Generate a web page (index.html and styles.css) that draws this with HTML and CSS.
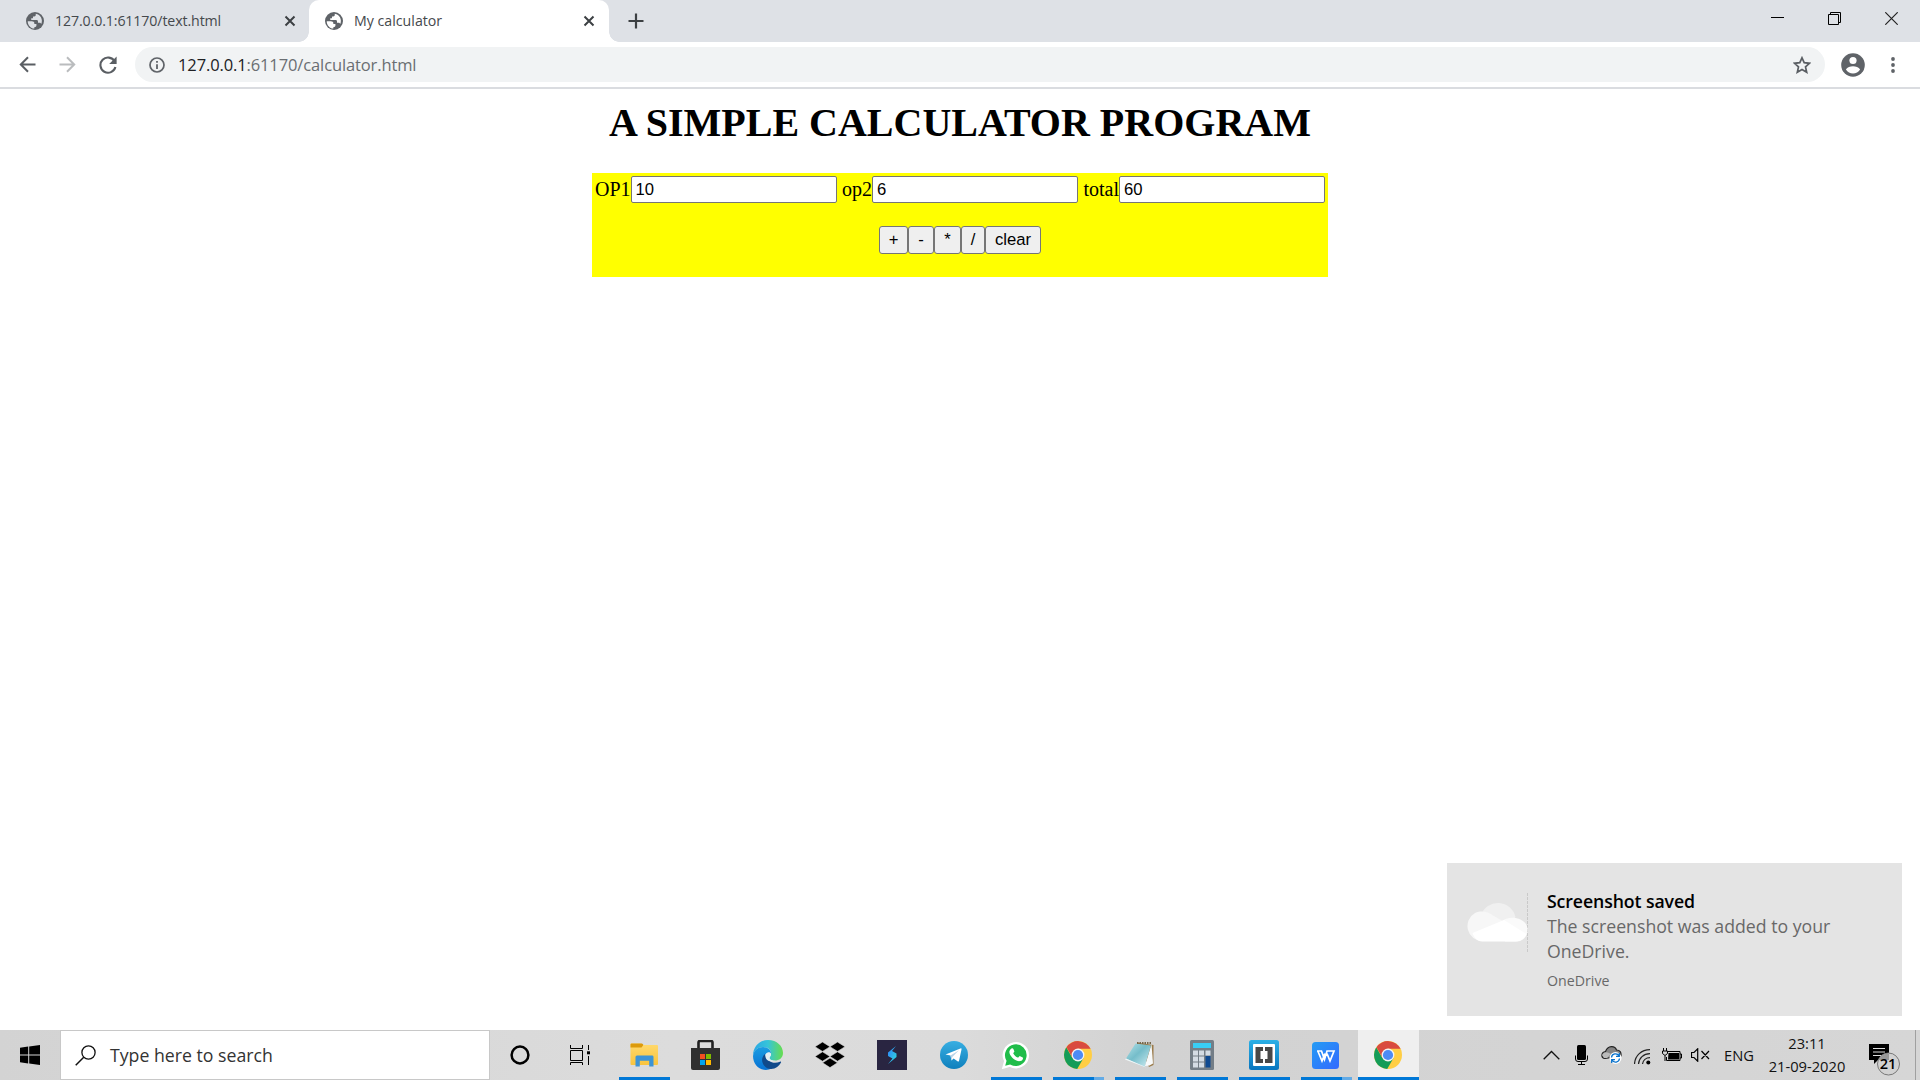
FILE: index.html
```html
<!DOCTYPE html>
<html lang="en">
<head>
<meta charset="utf-8">
<title>My calculator</title>
<link rel="stylesheet" href="styles.css">
</head>
<body>
<svg class="defs" width="0" height="0">
  <defs>
    <symbol id="globe" viewBox="0 0 24 24"><circle cx="12" cy="12" r="12" fill="#5f6368"/><path d="M2.3 12.2h5.500c2 0 3.300.9 3.300 2.600v1.100h2.800v2.200c0 1.600-1.200 2.200-2.800 2.200v1.800C6 21.700 2.300 17.500 2.300 12.200zM13 2.300V4c0 1.200-.8 1.900-2 1.900H9.300v2.400H7v2.300h7c1.500 0 2 .8 2 2v1.600h2c1 0 1.900.7 2.300 1.700 2.700-5.300-.7-12.800-7.300-13.600z" fill="var(--hole)"/></symbol>
    <symbol id="close" viewBox="0 0 12 12"><path d="M1.500 1.500l9 9M10.500 1.500l-9 9" stroke="#3c4043" stroke-width="2" fill="none"/></symbol>
    <symbol id="chrome" viewBox="0 0 28 28">
      <circle cx="14" cy="14" r="14" fill="#ffce44"/>
      <path d="M1.900 7A14 14 0 0 0 13.200 28L19.400 17.200 14 14 8.500 17.200 2.400 6.500z" fill="#149c58"/>
      <path d="M2.500 6.300 8.600 17 14 7.800h12.600A14 14 0 0 0 2.500 6.300z" fill="#d94b3f"/>
      <circle cx="14" cy="14" r="6.400" fill="#f4f4f4"/><circle cx="14" cy="14" r="5.100" fill="#4c8bf5"/>
    </symbol>
    <linearGradient id="tg" x2="0" y2="1"><stop stop-color="#37aee2"/><stop offset="1" stop-color="#0f80bd"/></linearGradient>
    <linearGradient id="edgeTop"><stop stop-color="#2aa7e5"/><stop offset=".5" stop-color="#36c4d9"/><stop offset="1" stop-color="#67dd4d"/></linearGradient>
    <linearGradient id="edgeLow" x2="0" y2="1"><stop stop-color="#1b9de2"/><stop offset="1" stop-color="#0872d4"/></linearGradient>
    <linearGradient id="folder" x2="0" y2="1"><stop stop-color="#ffd96d"/><stop offset="1" stop-color="#f9c43e"/></linearGradient>
    <linearGradient id="bolt" x2="1" y2="1"><stop stop-color="#2d7dff"/><stop offset="1" stop-color="#30e0d8"/></linearGradient>
    <linearGradient id="note" x2="1" y2="1"><stop stop-color="#b3e2e8"/><stop offset=".45" stop-color="#75bdca"/><stop offset="1" stop-color="#d1edf2"/></linearGradient>
    <linearGradient id="wps" x2="1" y2="1"><stop stop-color="#249cf4"/><stop offset="1" stop-color="#3369ff"/></linearGradient>
    <linearGradient id="brk" x2="0" y2="1"><stop stop-color="#2bb0e6"/><stop offset="1" stop-color="#0875bf"/></linearGradient>
  </defs>
</svg>

<header class="browser">
  <div class="tabstrip">
    <div class="tab">
      <svg class="favicon" width="18" height="18"><use href="#globe"/></svg>
      <span class="tab-title url-title">127.0.0.1:61170/text.html</span>
      <svg class="tab-close" width="12" height="12"><use href="#close"/></svg>
    </div>
    <div class="tab active">
      <svg class="favicon" width="18" height="18"><use href="#globe"/></svg>
      <span class="tab-title">My calculator</span>
      <svg class="tab-close" width="12" height="12"><use href="#close"/></svg>
    </div>
    <svg class="new-tab" width="16" height="16" viewBox="0 0 16 16"><path d="M8 .5v15M.5 8h15" stroke="#3c4043" stroke-width="2.200"/></svg>
    <div class="window-controls">
      <svg width="13" height="13" viewBox="0 0 13 13"><path d="M0 5.500h13" stroke="#000"/></svg>
      <svg width="13" height="13" viewBox="0 0 13 13"><path d="M.5 2.500h10v10H.5zM2.500 2.500v-2h10v10h-2" fill="none" stroke="#000"/></svg>
      <svg width="13" height="13" viewBox="0 0 13 13"><path d="M.3.3l12.400 12.400M12.700.3.3 12.700" stroke="#222" stroke-width="1.200"/></svg>
    </div>
  </div>
  <div class="toolbar">
    <svg width="17" height="17" viewBox="0 0 17 17"><path d="M16.500 8.500H2M9 1.300 1.800 8.500 9 15.700" fill="none" stroke="#5a5e63" stroke-width="2"/></svg>
    <svg width="17" height="17" viewBox="0 0 17 17"><path d="M.5 8.500H15M8 1.300l7.200 7.200L8 15.700" fill="none" stroke="#babcbe" stroke-width="2"/></svg>
    <svg width="18" height="18" viewBox="0 0 18 18"><path d="M15.600 5.300A7.600 7.600 0 1 0 16.400 11" fill="none" stroke="#5a5e63" stroke-width="2.100"/><path d="M17.600.6v7.500h-7.400z" fill="#5a5e63"/></svg>
    <div class="omnibox">
      <svg width="16" height="16" viewBox="0 0 16 16"><circle cx="8" cy="8" r="7" fill="none" stroke="#5f6368" stroke-width="1.700"/><path d="M8 7.200V12M8 4v1.800" stroke="#5f6368" stroke-width="1.800"/></svg>
      <span class="address"><b>127.0.0.1</b>:61170/calculator.html</span>
      <svg class="star" width="18" height="18" viewBox="0 0 18 18"><path d="M9 1.800l2.200 4.900 5.300.6-4 3.600 1.200 5.300L9 13.500l-4.700 2.700 1.200-5.300-4-3.600 5.300-.6z" fill="none" stroke="#5a5e63" stroke-width="1.700"/></svg>
    </div>
    <svg class="profile" width="24" height="24" viewBox="0 0 24 24"><circle cx="12" cy="12" r="11.800" fill="#5f6368"/><circle cx="12" cy="7.500" r="3.600" fill="#fff"/><path d="M4.900 16.500c1.400-2.200 4.300-3.300 7.100-3.300s5.700 1.100 7.100 3.300c-1.600 2.500-4.300 3.900-7.100 3.900s-5.500-1.400-7.100-3.900z" fill="#fff"/></svg>
    <svg class="menu" width="4" height="18" viewBox="0 0 4 18"><g fill="#5f6368"><circle cx="2" cy="3" r="1.900"/><circle cx="2" cy="9" r="1.900"/><circle cx="2" cy="15" r="1.900"/></g></svg>
  </div>
</header>

<main class="page">
  <h1>A SIMPLE CALCULATOR PROGRAM</h1>
  <form class="calculator">
    <div class="operands">
      <label>OP1<input type="text" value="10"></label>
      <label>op2<input type="text" value="6"></label>
      <label>total<input type="text" value="60"></label>
    </div>
    <div class="buttons">
      <button type="button" class="plus">+</button><button type="button" class="minus">-</button><button type="button" class="times">*</button><button type="button" class="divide">/</button><button type="button" class="clear">clear</button>
    </div>
  </form>
</main>

<aside class="toast">
  <svg width="61" height="60" viewBox="0 0 61 60"><path d="M60.500 0v59" stroke="#c9c9c9" stroke-dasharray="3 1"/><path d="M14 22a18 18 0 0 1 34.500 2L40 34H20z" fill="#f0f0f0"/><path d="M15.500 48A15 15 0 0 1 8 20c7-3 13-1 18 2.500l14 8-25 17.500z" fill="#f7f7f7"/><path d="M35 28c10-7 25-2 25.500 8C61 43 56 48.500 49 48.500H38z" fill="#fafafa"/><path d="M5.500 40 37 27l22.500 14c-2 5-6 7.500-11 7.500H15C11 48.500 7 45 5.500 40z" fill="#fff"/></svg>
  <div class="toast-text">
    <strong>Screenshot saved</strong>
    <p>The screenshot was added to your<br>OneDrive.</p>
    <small>OneDrive</small>
  </div>
</aside>

<footer class="taskbar">
  <div class="start"><svg width="20" height="20" viewBox="0 0 20 20"><path d="M0 2.700 8.200 1.500v8H0zM9.200 1.400 20 0v9.500H9.200zM0 10.500h8.200v8L0 17.300zM9.200 10.500H20V20L9.200 18.600z"/></svg></div>
  <div class="search">
    <svg width="21" height="21" viewBox="0 0 21 21"><circle cx="13.500" cy="7.500" r="6.600" fill="none" stroke="#111" stroke-width="1.300"/><path d="M8.700 12.300.7 20.300" stroke="#111" stroke-width="1.500"/></svg>
    <span>Type here to search</span>
  </div>
  <div class="system"><svg width="20" height="20" viewBox="0 0 20 20"><circle cx="10" cy="10" r="8.400" fill="none" stroke="#000" stroke-width="2.500"/></svg></div>
  <div class="system"><svg width="20" height="20" viewBox="0 0 20 20"><path d="M.5 0v3.500h12V0M.5 5.500h12v10H.5zM.5 20v-2.500h12V20M18.500 0v5M18.500 11v9" fill="none" stroke="#000"/><path d="M17 6.300h3v3h-3z"/></svg></div>
  <div class="apps">
    <div class="app open"><svg width="28" height="24" viewBox="0 0 28 24"><path d="M.5 1.500Q.5.500 1.500.500H11l2.500 1.500H27q1 0 1 1v18q0 1-1 1H1.500Q.5 22 .5 21z" fill="url(#folder)"/><path d="M.5 1.500Q.5.500 1.500.500H12q2 1 1 2L11.500 4.500H.5z" fill="#dc9a0c"/><path d="M5.500 23.500V14q0-1.500 1.500-1.500h15.500q1 0 1 1.500v9.500h-4.300v-5.700h-9.400v5.700z" fill="#3d94d6"/></svg></div>
    <div class="app"><svg width="29" height="30" viewBox="0 0 29 30"><path d="M7.500 10V2.500q0-1.500 1.500-1.500h11q1.500 0 1.500 1.500V10" fill="none" stroke="#222" stroke-width="2.600"/><path d="M0 8h29v20q0 2-2 2H2q-2 0-2-2z" fill="#303030"/><path d="M9 14h5v5H9z" fill="#f25022"/><path d="M15 14h5v5h-5z" fill="#7fba00"/><path d="M9 20h5v5H9z" fill="#00a4ef"/><path d="M15 20h5v5h-5z" fill="#ffb900"/></svg></div>
    <div class="app"><svg width="30" height="30" viewBox="0 0 30 30"><path d="M0 16C0 6 7 0 15 0c9 0 15 6 15 13 0 5-4 7.500-8 7.500-4 0-5.500-1.500-5.500-2.500s1.500-2 1.500-4.500C18 9 14 7 10 7 4 7 1 11 0 16z" fill="url(#edgeTop)"/><path d="M0 16C1 10 5 7 10 7c5 0 8 3 8 6.500-3-2-7 1-7 5C11 24 15 27 19 28.500 9 33 0 26 0 16z" fill="url(#edgeLow)"/><path d="M12 14c-6 5-2 15 6 15 5 0 8-3 10-6.500.3-.8-.2-1.200-1-.8-6 2.800-13 .5-15-7.700z" fill="#114a8b"/><path d="M12.500 14.500c1.500-3 5-3 5.500-.5.500 2-1.500 2.500-1.500 4 0 1.500 3 3 6 2.700-5 2-11-.2-10-6.200z" fill="#e4eef3"/></svg></div>
    <div class="app"><svg width="30" height="26" viewBox="0 0 30 26"><path d="M7.500 0 15 4.700 7.500 9.400 0 4.700zM22.500 0 30 4.700 22.500 9.400 15 4.700zM7.500 9.800 15 14.500 7.500 19.200 0 14.500zM22.500 9.800 30 14.500 22.500 19.200 15 14.500zM15 16l7.400 4.800L15 25.600 7.600 20.800z" stroke="#d8d8d8" stroke-width=".6"/></svg></div>
    <div class="app"><svg width="30" height="30" viewBox="0 0 30 30"><path d="M0 0h30v30H0z" fill="#292541"/><path d="M19 6 11 12.500v3.500l4.500 2.500L11 24l8.500-7v-3.500L15 11z" fill="url(#bolt)"/></svg></div>
    <div class="app"><svg width="28" height="28" viewBox="0 0 28 28"><circle cx="14" cy="14" r="14" fill="url(#tg)"/><path d="M5.500 13.500 21 7.300q.8 0 .5 1.200L19 20q-.4 1-1.500.3l-3.900-2.900-2.100 2.100-1-5z" fill="#fff"/><path d="m10.500 14.500 8.500-5.300-6.700 6.800-.8 3.500z" fill="#b9d4e8"/></svg></div>
    <div class="app open"><svg width="28" height="28" viewBox="0 0 28 28"><path d="M1.500 26.500 3.300 20A12 12 0 1 1 8 24.700z" fill="#20bd4a" stroke="#fff" stroke-width="2.400"/><path d="M9.500 7.500c.8-.5 1.600-.2 1.900.6l1 2.300-1.200 1.800c1.200 2.300 2.600 3.500 4.800 4.500l1.700-1.700 3 1.500c.7.400.3 3.100-2.500 3.600C13 21 6.300 13.500 7.500 10q.6-1.800 2-2.500z" fill="#fff"/></svg></div>
    <div class="app open stacked"><svg width="28" height="28"><use href="#chrome"/></svg></div>
    <div class="app open"><svg width="30" height="28" viewBox="0 0 30 28"><path d="M12 1.500 28.500 4v20L24 26z" fill="#9a7b4a"/><path d="m26.500 3 1.500 19.500-3.500 2L20 25z" fill="#f7f9fa"/><path d="M10.500 2.500 26 4.500 19.500 26 1 17.500z" fill="url(#note)"/><path d="m1 17.500 18.500 8 1.500 1L0 18.500z" fill="#eff8fa"/><path d="M12 2h15" stroke="#75674b" stroke-width="2.200" stroke-dasharray="1.500 1"/></svg></div>
    <div class="app open"><svg width="24" height="30" viewBox="0 0 24 30"><rect width="24" height="30" rx="1.500" fill="#747e87"/><path d="M3 3h18v5H3z" fill="#38cdf5"/><g fill="#d5dce4"><path d="M3 10.500h5v5H3zM9 10.500h5v5H9zM15.500 10.500h5v5h-5zM3 16.500h5v5H3zM9 16.500h5v5H9zM3 22.500h5v5H3zM9 22.500h5v5H9z"/></g><path d="M15.500 16h5v11.500h-5z" fill="#104a91"/></svg></div>
    <div class="app open"><svg width="30" height="30" viewBox="0 0 30 30"><rect width="30" height="30" rx="2.500" fill="url(#brk)"/><rect x="4" y="4" width="22" height="22" rx="1" fill="#fff"/><path d="M6.500 7H14v4h-2.500v8H14v4H6.500zM23.500 7H16v4h2.500v8H16v4h7.500z" fill="#484848"/></svg></div>
    <div class="app open stacked"><svg width="27" height="27" viewBox="0 0 27 27"><rect width="27" height="27" rx="3.500" fill="url(#wps)"/><path d="M5 9h4.500l3 8.500L15 9h7l-4 10-3-7.500M5.800 9l4.200 10 3-7.500" fill="none" stroke="#fff" stroke-width="1.700"/></svg></div>
    <div class="app open current"><svg width="28" height="28"><use href="#chrome"/></svg></div>
  </div>
  <div class="tray">
    <svg width="17" height="10" viewBox="0 0 17 10"><path d="M.7 9.300 8.500 1.500l7.800 7.800" fill="none" stroke="#111" stroke-width="1.300"/></svg>
    <svg class="mic" width="13" height="20" viewBox="0 0 13 20"><rect x="2" width="9" height="15" rx="1.500"/><path d="M.5 10.500V14q0 2.500 2.500 2.500h7q2.500 0 2.500-2.500v-3.500M6.500 16v3.500M3 19.500h7" fill="none" stroke="#000"/></svg>
    <svg class="cloud" width="21" height="18" viewBox="0 0 21 18"><path d="M4 12.500C-.5 12 0 6 4.500 5.500 7-1 14-.5 15.500 4 19 4 20.500 6.500 20 10z" fill="#858585" stroke="#222" stroke-width="1.100"/><path d="M1 9q3-5 9-1l-4 4H3z" fill="#bbb"/><circle cx="14.500" cy="12" r="6" fill="#fff"/><path d="M10.500 11.500a4 4 0 0 1 7.500-1.500m.5 2.500A4 4 0 0 1 11 14M18.300 7v3.300H15M10.700 17v-3.300H14" fill="none" stroke="#0872cc" stroke-width="1.300"/></svg>
    <svg class="wifi" width="17" height="16" viewBox="0 0 17 16"><path d="M.5 15C1 6.500 7.500.7 16 .7M4.500 15C5 9 9.500 4.700 16 4.700M8.500 15c.5-3.600 3.500-6.300 7.500-6.300" fill="none" stroke="#222" stroke-width="1.200"/><circle cx="14.300" cy="13.500" r="2"/></svg>
    <svg class="battery" width="20" height="14" viewBox="0 0 20 14"><path d="M5.500 3.500h12.500v9H4.500V9M18 6h1.500v4H18M1.500 0v3M4.500 0v3M.5 3h5v2.500L3 7.500.5 5.500zM3 7.500V13" fill="none" stroke="#000"/><path d="M6.500 5H17v6.500H6z"/></svg>
    <svg class="volume" width="19" height="14" viewBox="0 0 19 14"><path d="M.5 4.500H3L6.700.8v12.400L3 9.500H.5zM10.500 3l7.500 8M18 3l-7.500 8" fill="none" stroke="#000" stroke-width="1.200"/></svg>
    <span class="lang">ENG</span>
    <div class="clock"><span>23:11</span><span class="date">21-09-2020</span></div>
    <svg class="actions" width="32" height="32" viewBox="0 0 32 32"><path d="M0 0h20v16H9l-4 4v-4H0z"/><path d="M4 4.500h12M4 8h12M4 11.500h12" stroke="#ddd"/><circle cx="19.500" cy="20" r="11" fill="#d2d2d2" stroke="#777"/><path d="M12 12.500Q15 9 20 9.500V16H9.300z" fill="#999"/><text x="19" y="25.300" text-anchor="middle">21</text></svg>
    <i class="peek"></i>
  </div>
</footer>
</body>
</html>
```

FILE: styles.css
```css
* { box-sizing: border-box; }
body {
  margin: 0;
  width: 1920px;
  height: 1080px;
  overflow: hidden;
  display: flex;
  flex-direction: column;
  background: #fff;
  font-family: "Open Sans", "Noto Sans", sans-serif;
}
svg { display: block; flex: none; }
.defs { position: absolute; }

/* Browser frame */
.browser { height: 89px; border-bottom: 2px solid #dadce0; flex: none; }
.tabstrip { height: 42px; background: #dee1e6; display: flex; align-items: center; }
.tab {
  --hole: #dee1e6;
  height: 42px;
  width: 309px;
  padding: 0 13px 0 26px;
  display: flex;
  align-items: center;
  gap: 11px;
  color: #45494d;
  font-size: 14.2px;
}
.tab.active {
  --hole: #fff;
  width: 300px;
  padding: 0 14px 0 16px;
  background: #fff;
  border-radius: 10px 10px 0 0;
  position: relative;
}
.tab.active::before, .tab.active::after {
  content: "";
  position: absolute;
  bottom: 0;
  width: 10px;
  height: 10px;
}
.tab.active::before { left: -10px; background: radial-gradient(circle at 0 0, #dee1e6 9.500px, #fff 10px); }
.tab.active::after { right: -10px; background: radial-gradient(circle at 100% 0, #dee1e6 9.500px, #fff 10px); }
.tab-title { flex: 1; white-space: nowrap; line-height: 20px; }
.url-title { letter-spacing: -0.12px; }
.new-tab { margin-left: 19px; }
.window-controls { margin: -6px 22px 0 auto; display: flex; gap: 44px; }
.toolbar { height: 45px; display: flex; align-items: center; padding: 0 25px 0 19px; }
.toolbar > svg { margin-right: 23px; }
.toolbar > svg:nth-of-type(3) { margin-right: 18px; }
.omnibox {
  flex: 1;
  height: 35px;
  border-radius: 18px;
  background: #f1f3f4;
  display: flex;
  align-items: center;
  padding: 0 14px;
}
.address { margin-left: 13px; font-size: 16.500px; letter-spacing: -0.12px; color: #6a6e72; }
.address b { font-weight: 400; color: #202124; }
.star { margin-left: auto; }
.toolbar > .profile { margin: 0 26px 0 16px; }
.toolbar > .menu { margin: 0; }

/* Web page */
.page { flex: 1; font: 20px "Liberation Serif", serif; display: flex; flex-direction: column; align-items: center; }
.page h1 { margin: 11px 0 0; font-size: 40px; line-height: 46px; }
.calculator { margin: 27px 0 0; width: 736px; height: 104px; background: #ff0; padding: 3px; }
.operands { display: flex; justify-content: space-between; }
.operands label { display: flex; align-items: center; line-height: 27px; }
.operands input {
  width: 206px;
  height: 27px;
  margin: 0;
  padding: 1px 4px;
  border: 1.500px solid #767676;
  border-radius: 2px;
  font: 16.670px "Liberation Sans", sans-serif;
}
.buttons { margin-top: 23px; display: flex; justify-content: center; }
.buttons button {
  height: 28px;
  margin: 0;
  padding: 0;
  border: 1.500px solid #767676;
  border-radius: 3px;
  background: #efefef;
  color: #000;
  font: 16.670px "Liberation Sans", sans-serif;
}
.plus { width: 29px; }
.minus { width: 26px; }
.times { width: 27px; }
.divide { width: 24px; }
.clear { width: 56px; }

/* Notification */
.toast {
  flex: none;
  align-self: flex-end;
  width: 455px;
  height: 153px;
  margin: 0 18px 14px 0;
  padding: 30px 0 0 20px;
  display: flex;
  gap: 19px;
  background: #e4e4e4;
}
.toast-text { margin-top: -4px; font-size: 17.700px; line-height: 25px; color: #686868; }
.toast strong { display: block; font-weight: 600; letter-spacing: -0.1px; color: #000; }
.toast p { margin: 0; }
.toast small { display: block; margin-top: 4px; font-size: 14.200px; }

/* Taskbar */
.taskbar { flex: none; height: 50px; display: flex; background: linear-gradient(90deg, #d3d3d3, #dcdcdc 35%, #dbdbdb 50%, #d2d2d2 60%, #d6d6d6); }
.start, .system { width: 60px; display: flex; align-items: center; justify-content: center; }
.search {
  width: 430px;
  border: 1px solid #c8c8c8;
  background: #fff;
  display: flex;
  align-items: center;
  gap: 14px;
  padding-left: 14px;
  font-size: 17.700px;
  color: #333;
}
.apps { display: flex; gap: 1px; margin-left: 4px; }
.app {
  width: 61px;
  display: grid;
  grid-template-rows: 47px 3px;
  place-items: center;
  padding: 0 5px;
}
.app.open::after { content: ""; width: 100%; height: 3px; background: #0078d7; }
.app.stacked::after { background: linear-gradient(90deg, #0078d7 41px, #63abe6 41px); }
.app.current { padding: 0; background: #efefef; }
.app svg { margin: 3px 2px 0 0; }
.tray { flex: 1; display: flex; align-items: center; padding-left: 124px; font-size: 14.700px; color: #111; }
.mic { margin-left: 15px; }
.cloud { margin-left: 13px; }
.wifi { margin: 3px 0 0 12px; }
.battery { margin-left: 11px; }
.volume { margin-left: 9px; }
.lang { margin-left: 14px; width: 29px; }
.clock { margin-left: 15px; width: 78px; display: flex; flex-direction: column; align-items: center; line-height: 23px; }
.date { white-space: nowrap; }
.actions { margin: 10px 0 0 auto; }
.actions text { font: 600 14.500px "Open Sans", sans-serif; }
.peek { width: 5px; height: 50px; margin-left: 14px; border-left: 1px solid #a0a0a0; }
```
